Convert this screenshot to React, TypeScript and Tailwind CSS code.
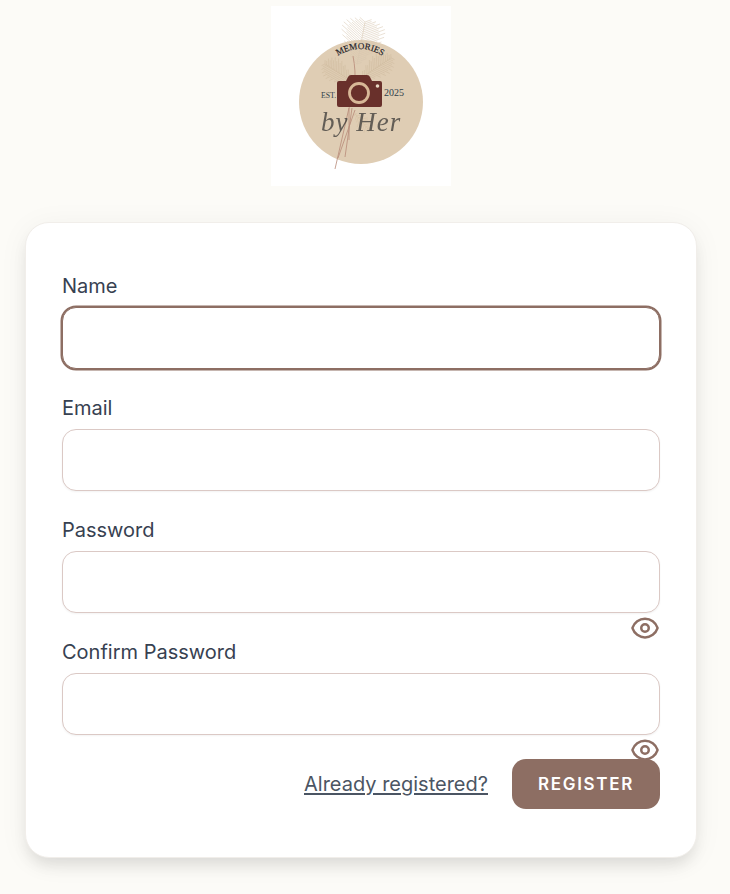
import { HiOutlineEye } from 'react-icons/hi2';

const fieldClass = "block w-full h-[62px] rounded-[14px] border border-[#dbc9c5] bg-white shadow-[0_1px_2px_rgba(0,0,0,0.05)] outline-none";

// feathery strands either side of a plume's stem
const Plume = ({ x0, y0, x1, y1, n = 12, len = 12, color = "#cdb89c" }: { x0: number; y0: number; x1: number; y1: number; n?: number; len?: number; color?: string }) => {
  const dx = x1 - x0;
  const dy = y1 - y0;
  const d = Math.hypot(dx, dy);
  const ux = dx / d;
  const uy = dy / d;
  const strands = [];
  for (let i = 0; i < n; i++) {
    const t = i / (n - 1);
    const px = x0 + dx * t;
    const py = y0 + dy * t;
    const l = len * (0.3 + Math.sin(t * Math.PI) * 0.8) * (i % 2 ? 1 : 0.75);
    for (const side of [-1, 1]) {
      const ex = px + ux * l * 0.6 - uy * l * side;
      const ey = py + uy * l * 0.6 + ux * l * side;
      strands.push(`M${px.toFixed(1)} ${py.toFixed(1)}L${ex.toFixed(1)} ${ey.toFixed(1)}`);
    }
  }
  return <path d={`M${x0} ${y0}L${x1} ${y1}` + strands.join("")} fill="none" stroke={color} strokeWidth="0.7" opacity="0.75" />;
};

const Logo = () => (
  <svg width="180" height="180" viewBox="0 0 180 180" className="block bg-white">
    <defs>
      <path id="memArc" d="M 65 51 Q 89 35 113 51" fill="none" />
      <filter id="soft"><feGaussianBlur stdDeviation="0.4" /></filter>
    </defs>
    <circle cx="90" cy="96" r="62" fill="#dfcdb4" />
    <g filter="url(#soft)">
      <Plume x0={86} y0={58} x1={94} y1={16} n={22} len={20} color="#d6c6ae" />
      <Plume x0={82} y0={76} x1={54} y1={58} n={18} len={11} />
      <Plume x0={90} y0={72} x1={120} y1={52} n={18} len={11} />
      <Plume x0={84} y0={108} x1={98} y1={124} n={10} len={7} color="#d2bd9f" />
    </g>
    <g fill="none" stroke="#b88a78" strokeWidth="0.8">
      <path d="M82 50 C86 70 84 90 78 102 L64 163" />
      <path d="M81 102 L74 151" />
      <path d="M84 104 L67 152" />
      <path d="M78 102 L78 134" />
    </g>
    <text fontFamily="'Liberation Serif', serif" fontSize="9" fill="#1c1c26" stroke="#1c1c26" strokeWidth="0.15">
      <textPath href="#memArc" startOffset="50%" textAnchor="middle">MEMORIES</textPath>
    </text>
    <text x="50" y="92" fontFamily="'Liberation Serif', serif" fontSize="7.8" fill="#2f3f4a">EST.</text>
    <text x="113" y="90" fontFamily="'Liberation Serif', serif" fontSize="10" fill="#2f3f4a">2025</text>
    {/* camera */}
    <path d="M68 75 h7 l2 -4 q1 -2 3 -2 h16 q2 0 3 2 l2 4 h8 q2 0 2 2 v22 q0 2 -2 2 h-41 q-2 0 -2 -2 v-22 q0 -2 2 -2 z" fill="#69302b" />
    <circle cx="88" cy="87" r="9.5" fill="none" stroke="#d8b898" strokeWidth="2.8" />
    <circle cx="106.5" cy="80" r="1.8" fill="#ead9c4" />
    <text x="50" y="125" fontFamily="'Liberation Serif', serif" fontStyle="italic" fontSize="27" letterSpacing="1" fill="#2f2f2f" opacity="0.7">by Her</text>
  </svg>
);

const Label = ({ children }: { children: React.ReactNode }) => (
  <label className="block h-7 text-[20px] leading-[30px] text-[#374151]">{children}</label>
);

const Eye = () => (
  <button type="button" className="absolute right-0 top-[62px] text-[#8d6e63]">
    <HiOutlineEye size={30} strokeWidth={2} />
  </button>
);

export default function App() {
  return (
    <div className="min-h-screen bg-[#fcfbf7] flex flex-col items-center pr-2 font-['Inter','Noto_Sans',sans-serif]">
      <div className="pt-[6px]">
        <Logo />
      </div>

      <div className="mt-9 w-[672px] bg-white rounded-[24px] border border-[#f1eeea] px-9 py-12 shadow-[0_10px_15px_-3px_rgba(0,0,0,0.1),0_4px_30px_rgba(0,0,0,0.05)]">
        <div>
          <Label>Name</Label>
          <input className="mt-2 block w-full h-[62px] rounded-[14px] border border-[#8d6e63] ring-[1.5px] ring-[#8d6e63] bg-white outline-none" />
        </div>

        <div className="mt-6">
          <Label>Email</Label>
          <input className={"mt-2 " + fieldClass} />
        </div>

        <div className="mt-6">
          <Label>Password</Label>
          <div className="relative mt-2">
            <input type="password" className={fieldClass} />
            <Eye />
          </div>
        </div>

        <div className="mt-6">
          <Label>Confirm Password</Label>
          <div className="relative mt-2">
            <input type="password" className={fieldClass} />
            <Eye />
          </div>
        </div>

        <div className="relative mt-6 flex items-center justify-end">
          <a href="#" className="text-[20px] text-[#4b5563] underline decoration-[1.5px] underline-offset-2">Already registered?</a>
          <button className="ml-6 w-[148px] h-[50px] pt-px rounded-[14px] bg-[#8d6e63] text-white text-[17px] font-semibold tracking-[0.1em]">REGISTER</button>
        </div>
      </div>
    </div>
  );
}
